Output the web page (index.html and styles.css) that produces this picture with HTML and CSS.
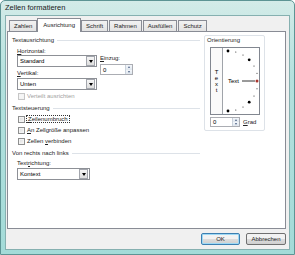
FILE: index.html
```html
<!DOCTYPE html>
<html lang="de">
<head>
  <meta charset="UTF-8" />
  <title>Zellen formatieren</title>
  <link rel="stylesheet" href="styles.css">
</head>
<body>
  <div class="window">
    <div class="titlebar">Zellen formatieren</div>
    <div class="client">
      <div class="tabs">
        <div class="tab">Zahlen</div>
        <div class="tab active">Ausrichtung</div>
        <div class="tab">Schrift</div>
        <div class="tab">Rahmen</div>
        <div class="tab">Ausfüllen</div>
        <div class="tab">Schutz</div>
      </div>

      <div class="panel">
        <div class="left">
          <div class="group-head"><span>Textausrichtung</span></div>
          <div class="align-row">
            <div class="col">
              <div class="label lbl-first"><u>H</u>orizontal:</div>
              <div class="select sel-wide"><span>Standard</span><i class="drop"></i></div>
              <div class="label lbl-vert"><u>V</u>ertikal:</div>
              <div class="select sel-wide sel-vert"><span>Unten</span><i class="drop"></i></div>
            </div>
            <div class="col col-indent">
              <div class="label"><u>E</u>inzug:</div>
              <div class="spin spin-indent"><span>0</span><div class="spin-btns"><i class="up"></i><i class="down"></i></div></div>
            </div>
          </div>
          <div class="check disabled check-first"><i class="box"></i><span>Verteilt ausrichten</span></div>

          <div class="group-head head-gap"><span>Textsteuerung</span></div>
          <div class="check check-gap"><i class="box"></i><span class="focus"><u>Z</u>eilenumbruch</span></div>
          <div class="check check-gap"><i class="box"></i><span><u>A</u>n Zellgröße anpassen</span></div>
          <div class="check check-gap"><i class="box"></i><span>Zellen <u>v</u>erbinden</span></div>

          <div class="group-head head-gap"><span>Von rechts nach links</span></div>
          <div class="label lbl-dir">Text<u>r</u>ichtung:</div>
          <div class="select sel-dir"><span>Kontext</span><i class="drop"></i></div>
        </div>

        <div class="orient">
          <div class="orient-title">Orientierung</div>
          <div class="dial">
            <div class="dial-vert">
              <span>T</span><span>e</span><span>x</span><span>t</span>
            </div>
            <svg class="dial-arc" width="36" height="66" viewBox="0 0 36 66">
              <g fill="#000">
                <circle cx="5" cy="3" r="1.4"/>
                <circle cx="12.8" cy="4.1" r="0.5"/>
                <circle cx="20" cy="7" r="0.5"/>
                <circle cx="26.2" cy="11.8" r="1.4"/>
                <circle cx="31" cy="18" r="0.5"/>
                <circle cx="34" cy="25.2" r="0.5"/>
                <circle cx="34" cy="40.8" r="0.5"/>
                <circle cx="31" cy="48" r="0.5"/>
                <circle cx="26.2" cy="54.2" r="1.4"/>
                <circle cx="20" cy="59" r="0.5"/>
                <circle cx="12.8" cy="62" r="0.5"/>
                <circle cx="5" cy="63" r="1.4"/>
              </g>
              <text x="5" y="35.2" class="dial-text">Text</text>
              <line x1="19" y1="33" x2="32" y2="33" stroke="#000" stroke-width="0.8"/>
              <circle cx="34" cy="33" r="1.5" fill="#a8352d"/>
            </svg>
          </div>
          <div class="deg-row">
            <div class="spin spin-deg"><span>0</span><div class="spin-btns"><i class="up"></i><i class="down"></i></div></div>
            <div class="label"><u>G</u>rad</div>
          </div>
        </div>
      </div>

      <div class="buttons">
        <div class="btn default">OK</div>
        <div class="btn">Abbrechen</div>
      </div>
    </div>
  </div>
</body>
</html>
```

FILE: styles.css
```css
* {
  box-sizing: border-box;
  margin: 0;
  padding: 0;
}

body {
  font-family: "Liberation Sans", Arial, sans-serif;
  font-size: 6px;
  color: #000;
  background: #fff;
}

u {
  text-decoration: underline;
}

.window {
  width: 295px;
  height: 255px;
  display: flex;
  flex-direction: column;
  background: linear-gradient(#d3ebe8, #b4e1de 30%, #a3dbd8);
  border: 1px solid #5d9494;
  border-radius: 5px 5px 0 0;
}

.titlebar {
  height: 14px;
  padding-left: 4px;
  line-height: 14px;
  font-size: 7.5px;
  color: #1b1b1b;
}

.client {
  flex: 1;
  display: flex;
  flex-direction: column;
  margin: 0 4px 4px 4px;
  padding: 2px 3px 4px 1px;
  background: #f0f0f0;
  border: 1px solid #86b0b0;
}

/* tab strip */
.tabs {
  display: flex;
  align-items: flex-end;
  height: 13px;
  padding-left: 2px;
}

.tab {
  height: 11px;
  line-height: 10px;
  padding: 0 4px;
  margin-right: 1px;
  border: 1px solid #898c95;
  border-bottom: none;
  background: linear-gradient(#f2f2f2, #e3e3e3);
  color: #222;
}

.tab.active {
  height: 14px;
  margin: 0 0 -1px -1px;
  padding: 1px 5px 0;
  background: #fff;
  position: relative;
  z-index: 1;
}

/* tab page */
.panel {
  height: 198px;
  display: flex;
  padding: 4px 0 0 4px;
  background: #fff;
  border: 1px solid #898c95;
}

.left {
  width: 188px;
  display: flex;
  flex-direction: column;
}

.group-head {
  display: flex;
  align-items: center;
  height: 8px;
  color: #262626;
}

.group-head::after {
  content: "";
  flex: 1;
  height: 1px;
  margin-left: 3px;
  background: #dde2e8;
}

.head-gap {
  margin-top: 4px;
}

.label {
  height: 8px;
  line-height: 8px;
  color: #222;
}

.lbl-first {
  margin-top: 3px;
}

.lbl-vert {
  margin-top: 2px;
}

.lbl-dir {
  margin: 2px 0 0 5px;
}

.align-row {
  display: flex;
}

.col {
  display: flex;
  flex-direction: column;
  padding-left: 5px;
}

.col-indent {
  padding: 10px 0 0 3px;
}

.select {
  display: flex;
  align-items: center;
  height: 12px;
  padding: 1px 1px 1px 2px;
  background: #fff;
  border: 1px solid #8d9096;
}

.select span {
  flex: 1;
}

.sel-wide {
  width: 80px;
}

.sel-vert {
  margin-top: 1px;
}

.sel-dir {
  width: 73px;
  margin: 1px 0 0 5px;
}

.drop {
  width: 9px;
  height: 10px;
  border: 1px solid #a3a6ad;
  background: linear-gradient(#f6f6f6, #dedede);
  position: relative;
}

.drop::after {
  content: "";
  position: absolute;
  left: 1.5px;
  top: 3px;
  border-left: 2.5px solid transparent;
  border-right: 2.5px solid transparent;
  border-top: 3px solid #000;
}

.spin {
  display: flex;
  align-items: center;
  background: #fff;
  border: 1px solid #abadb3;
  padding-left: 2px;
}

.spin span {
  flex: 1;
}

.spin-indent {
  width: 33px;
  height: 11px;
  margin-top: 2px;
}

.spin-btns {
  width: 7px;
  height: 100%;
  display: flex;
  flex-direction: column;
  border-left: 1px solid #c9d2dc;
}

.spin-btns i {
  flex: 1;
  position: relative;
  background: linear-gradient(#f3f6fa, #dfe6ee);
}

.spin-btns .up::after,
.spin-btns .down::after {
  content: "";
  position: absolute;
  left: 1.5px;
  border-left: 1.5px solid transparent;
  border-right: 1.5px solid transparent;
}

.spin-btns .up::after {
  top: 1px;
  border-bottom: 2px solid #4d6185;
}

.spin-btns .down::after {
  top: 1px;
  border-top: 2px solid #4d6185;
}

/* checkboxes */
.check {
  display: flex;
  align-items: center;
  height: 8px;
  padding-left: 6px;
  color: #222;
}

.check-first {
  margin-top: 2px;
}

.check-gap {
  margin-top: 3px;
}

.box {
  width: 7px;
  height: 7px;
  margin-right: 2px;
  border: 1px solid #8e8f8f;
  background: linear-gradient(135deg, #dcdcdc, #f8f8f8);
  box-shadow: inset 0 0 0 1px #f4f4f4;
}

.check.disabled {
  color: #a0a0a0;
}

.check.disabled .box {
  border-color: #c6c6c6;
  background: #f6f6f6;
}

.focus {
  padding: 0 1px;
  outline: 1px dotted #333;
}

/* orientation */
.orient {
  width: 61px;
  height: 96px;
  margin: -1px 0 0 4px;
  padding: 0 4px 0 5px;
  border: 1px solid #dde2e8;
  border-radius: 2px;
}

.orient-title {
  height: 8px;
  line-height: 8px;
  margin-left: -3px;
  color: #262626;
}

.dial {
  display: flex;
  width: 50px;
  height: 68px;
  margin-top: 3px;
  border: 1px solid #828790;
}

.dial-vert {
  width: 12px;
  display: flex;
  flex-direction: column;
  align-items: center;
  justify-content: center;
  line-height: 6px;
  border-right: 1px solid #a0a4aa;
  background: #fafafa;
}

.dial-arc {
  display: block;
}

.dial-text {
  font-family: "Liberation Sans", Arial, sans-serif;
  font-size: 6px;
}

.deg-row {
  display: flex;
  align-items: center;
  margin-top: 2px;
}

.spin-deg {
  width: 30px;
  height: 10px;
  margin-right: 3px;
}

/* dialog buttons */
.buttons {
  display: flex;
  justify-content: flex-end;
  gap: 6px;
  margin-top: 4px;
}

.btn {
  height: 12px;
  line-height: 10px;
  text-align: center;
  border: 1px solid #707070;
  border-radius: 2px;
  background: linear-gradient(#f2f2f2 45%, #dcdcdc 55%, #cfcfcf);
  color: #222;
}

.btn.default {
  width: 39px;
  border-color: #3c7fb1;
  box-shadow: inset 0 0 0 1px #9fd9f5;
}

.btn:not(.default) {
  width: 40px;
}
```
